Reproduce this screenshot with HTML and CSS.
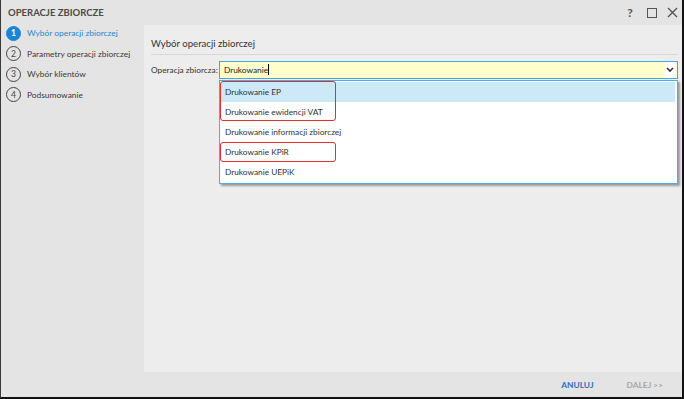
FILE: index.html
```html
<!DOCTYPE html>
<html lang="pl">
<head>
<meta charset="utf-8">
<title>Operacje zbiorcze</title>
<link rel="stylesheet" href="styles.css">
</head>
<body>
<div class="window">
  <div class="titlebar">
    <div class="title">OPERACJE ZBIORCZE</div>
    <div class="controls">
      <span class="ctl help">?</span>
      <span class="ctl max"><span class="sq"></span></span>
      <span class="ctl close">
        <svg width="11" height="11" viewBox="0 0 11 11"><path d="M1 1 L10 10 M10 1 L1 10" stroke="#555" stroke-width="1.4" fill="none"/></svg>
      </span>
    </div>
  </div>
  <div class="body">
    <div class="sidebar">
      <div class="step active"><span class="num">1</span><span class="label">Wybór operacji zbiorczej</span></div>
      <div class="step"><span class="num">2</span><span class="label">Parametry operacji zbiorczej</span></div>
      <div class="step"><span class="num">3</span><span class="label">Wybór klientów</span></div>
      <div class="step"><span class="num">4</span><span class="label">Podsumowanie</span></div>
    </div>
    <div class="main">
      <div class="panel">
        <h2 class="heading">Wybór operacji zbiorczej</h2>
        <div class="field">
          <span class="field-label">Operacja zbiorcza:</span>
          <div class="combo">
            <div class="input">Drukowanie<span class="caret"></span></div>
            <span class="arrow">
              <svg width="8" height="6" viewBox="0 0 8 6"><path d="M1 1 L4 4 L7 1" stroke="#333" stroke-width="1.6" fill="none"/></svg>
            </span>
            <div class="list">
              <div class="item selected">Drukowanie EP</div>
              <div class="item">Drukowanie ewidencji VAT</div>
              <div class="item">Drukowanie informacji zbiorczej</div>
              <div class="item">Drukowanie KPiR</div>
              <div class="item">Drukowanie UEPiK</div>
              <div class="mark mark-a"></div>
              <div class="mark mark-b"></div>
            </div>
          </div>
        </div>
      </div>
      <div class="footer">
        <span class="btn cancel">ANULUJ</span>
        <span class="btn next">DALEJ &gt;&gt;</span>
      </div>
    </div>
  </div>
</div>
</body>
</html>
```
FILE: styles.css
```css
* { box-sizing: border-box; }
html, body { margin: 0; padding: 0; }
body {
  font-family: Lato, "Open Sans", sans-serif;
  color: #333;
  background: #e4e4e4;
}
.window {
  width: 684px;
  height: 399px;
  background: #e4e4e4;
  border-left: 1px solid #3a3a3a;
  border-right: 2px solid #111;
  border-bottom: 2px solid #111;
  display: flex;
  flex-direction: column;
}
.titlebar {
  height: 25px;
  display: flex;
  align-items: center;
  justify-content: space-between;
  padding-left: 7px;
}
.title {
  font-size: 9.5px;
  font-weight: 700;
  color: #4a4a4a;
}
.controls {
  display: flex;
  align-items: center;
  height: 100%;
}
.ctl {
  display: flex;
  align-items: center;
  justify-content: center;
  width: 22px;
  height: 100%;
  color: #555;
}
.help { font-size: 12px; font-weight: 700; }
.sq { width: 10px; height: 10px; border: 1.5px solid #555; display: block; }
.close { width: 19px; }
.body {
  flex: 1;
  display: flex;
}
.sidebar {
  width: 143px;
  margin-top: -2px;
  display: flex;
  flex-direction: column;
}
.step {
  display: flex;
  align-items: center;
  height: 20.5px;
  padding-left: 5px;
  font-size: 8.4px;
  color: #3a3a3a;
}
.num {
  width: 15px;
  height: 15px;
  border: 1.3px solid #444;
  border-radius: 50%;
  display: flex;
  align-items: center;
  justify-content: center;
  font-size: 8.6px;
  margin-right: 6px;
  color: #444;
}
.step.active .num {
  background: #1a85d8;
  border-color: #1a85d8;
  color: #fff;
  font-weight: 700;
}
.step.active .label { color: #2a86d4; }
.main {
  flex: 1;
  display: flex;
  flex-direction: column;
}
.panel {
  flex: 1;
  background: #ededed;
  padding: 11px 4px 0 7px;
}
.heading {
  margin: 0;
  font-size: 9.6px;
  font-weight: 400;
  color: #333;
  padding-bottom: 3px;
  border-bottom: 1px solid #d6d6d6;
  line-height: 15px;
}
.field {
  display: flex;
  align-items: flex-start;
  margin-top: 6px;
}
.field-label {
  font-size: 8.3px;
  line-height: 18px;
  width: 68px;
  flex: none;
  white-space: nowrap;
  color: #333;
}
.combo {
  position: relative;
  flex: 1;
}
.input {
  height: 18px;
  border: 1px solid #3ba9e4;
  background: #ffffcb;
  font-size: 8.3px;
  line-height: 16px;
  padding-left: 4px;
  color: #222;
}
.caret {
  display: inline-block;
  width: 1px;
  height: 11px;
  background: #000;
  vertical-align: -2px;
}
.arrow {
  position: absolute;
  right: 3px;
  top: 1px;
  width: 10px;
  height: 16px;
  background: #fff;
  display: flex;
  align-items: center;
  justify-content: center;
}
.list {
  position: absolute;
  left: 0;
  right: 0;
  top: 19px;
  background: #fff;
  border: 1px solid #4aaee3;
  box-shadow: 2px 2px 2px rgba(0,0,0,0.35);
  padding: 1px 2px 1px 1px;
}
.item {
  height: 20px;
  line-height: 20px;
  padding-left: 4px;
  font-size: 8.3px;
  color: #333;
}
.item.selected { background: #cde9f7; }
.mark {
  position: absolute;
  left: 0;
  width: 116px;
  border: 1.5px solid #e0302e;
  border-radius: 3px;
}
.mark-a { top: 0; height: 40px; }
.mark-b { top: 61px; height: 20px; }
.footer {
  height: 25px;
  display: flex;
  align-items: center;
  justify-content: flex-end;
  padding-right: 19px;
  font-size: 8.4px;
}
.btn { font-weight: 700; }
.cancel { color: #2a74b8; margin-right: 33px; }
.next { color: #a9a9a9; }
```
